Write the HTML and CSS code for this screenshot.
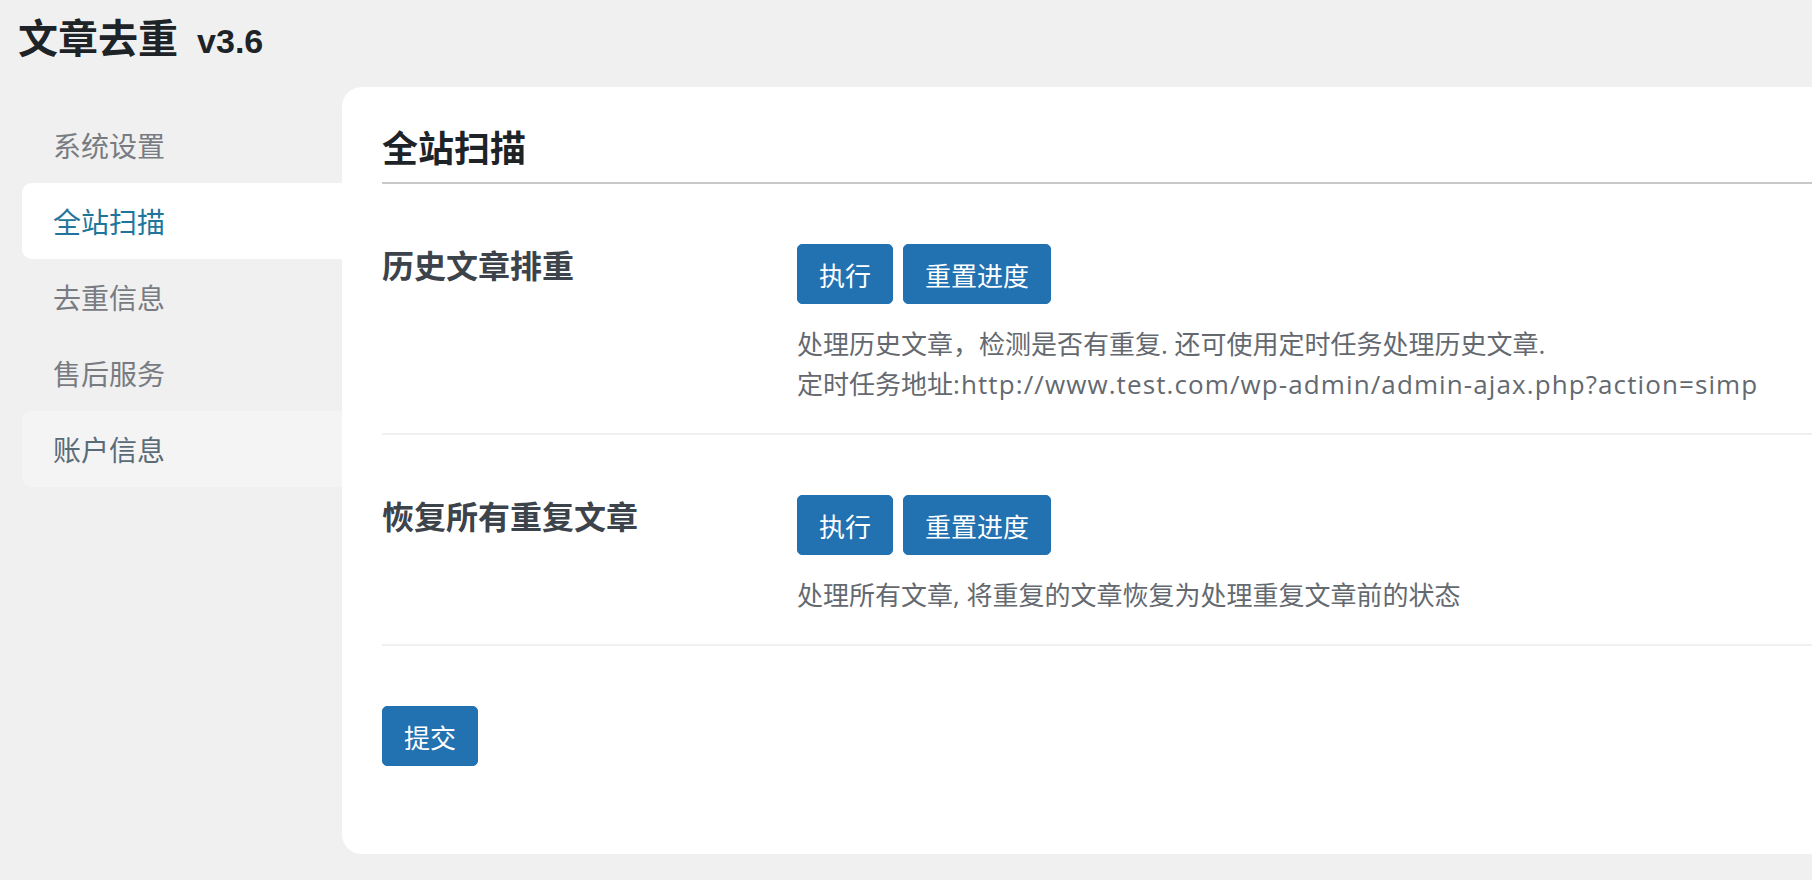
FILE: index.html
```html
<!DOCTYPE html>
<html lang="zh-CN">
<head>
<meta charset="utf-8">
<title>文章去重</title>
<link rel="stylesheet" href="styles.css">
</head>
<body>

<h1 class="page-title">文章去重 <span class="version">v3.6</span></h1>

<div class="layout">
  <ul class="side-nav">
    <li class="nav-item">系统设置</li>
    <li class="nav-item active">全站扫描</li>
    <li class="nav-item">去重信息</li>
    <li class="nav-item">售后服务</li>
    <li class="nav-item hover">账户信息</li>
  </ul>

  <div class="panel">
    <h2 class="panel-title">全站扫描</h2>

    <div class="form-row">
      <div class="row-label">历史文章排重</div>
      <div class="row-field">
        <div class="btn-group">
          <button class="btn">执行</button>
          <button class="btn">重置进度</button>
        </div>
        <p class="desc">处理历史文章，检测是否有重复. 还可使用定时任务处理历史文章.<br>定时任务地址<span class="cron-url">:http://www.test.com/wp-admin/admin-ajax.php?action=simp</span></p>
      </div>
    </div>

    <div class="form-row">
      <div class="row-label">恢复所有重复文章</div>
      <div class="row-field">
        <div class="btn-group">
          <button class="btn">执行</button>
          <button class="btn">重置进度</button>
        </div>
        <p class="desc">处理所有文章, 将重复的文章恢复为处理重复文章前的状态</p>
      </div>
    </div>

    <div class="submit-row">
      <button class="btn">提交</button>
    </div>
  </div>
</div>

</body>
</html>
```

FILE: styles.css
```css
body {
  margin: 0;
  background: #f0f0f0;
  font-family: "Noto Sans CJK SC", "Liberation Sans", sans-serif;
  color: #1d2327;
  overflow: hidden;
}

.page-title {
  margin: 10px 0 0 18px;
  font-size: 40px;
  line-height: 52px;
  font-weight: bold;
  color: #1d2327;
}

.version {
  margin-left: 10px;
  font-family: "Liberation Sans", sans-serif;
  font-size: 34px;
  font-weight: bold;
}

.layout {
  display: flex;
  margin-top: 20px;
  padding-left: 22px;
}

.side-nav {
  list-style: none;
  margin: 0;
  padding: 20px 0 0;
  width: 320px;
  flex-shrink: 0;
}

.nav-item {
  height: 76px;
  line-height: 76px;
  padding-left: 31px;
  font-size: 28px;
  color: #787c82;
  border-radius: 10px 0 0 10px;
}

.nav-item.active { background: #fff; color: #21759b; }

.nav-item.hover { background: #f4f4f4; color: #5a6b78; }

.panel {
  flex: 1;
  background: #fff;
  border-radius: 20px 0 0 20px;
  padding: 35px 0 88px 40px;
}

.panel-title {
  margin: 0;
  padding-bottom: 12px;
  font-size: 36px;
  line-height: 48px;
  font-weight: bold;
  border-bottom: 2px solid #c8c8c8;
}

.form-row {
  display: flex;
  align-items: flex-start;
  padding: 60px 0 29px;
  border-bottom: 2px solid #f0f0f0;
}

.row-label {
  width: 415px;
  flex-shrink: 0;
  font-size: 32px;
  line-height: 40px;
  font-weight: bold;
  color: #3c434a;
}

.btn-group {
  display: flex;
  gap: 10px;
}

.btn {
  height: 60px;
  padding: 0 21px;
  font-family: "Noto Sans CJK SC", sans-serif;
  font-size: 26px;
  color: #fff;
  background: #2271b1;
  border: 1px solid #2271b1;
  border-radius: 5px;
}

.desc {
  margin: 20px 0 0;
  font-family: "Open Sans", "Noto Sans CJK SC", sans-serif;
  font-size: 26px;
  line-height: 40px;
  color: #646970;
}

.cron-url {
  letter-spacing: 1.1px;
}

.submit-row {
  margin-top: 60px;
}
```
